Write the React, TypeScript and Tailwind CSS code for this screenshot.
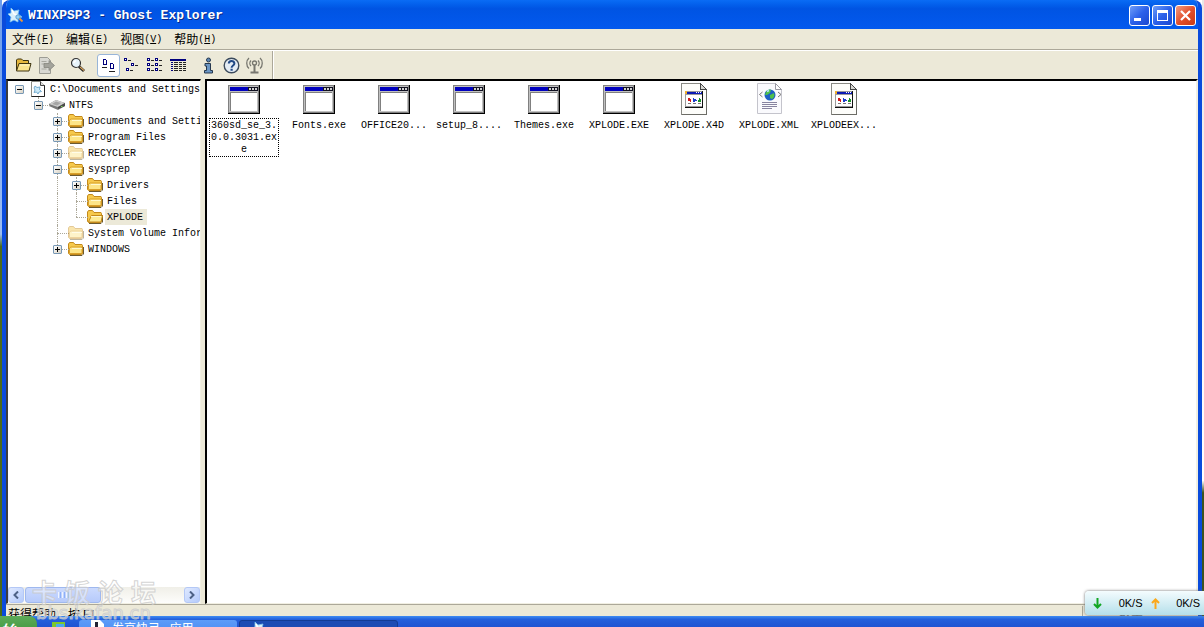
import React from "react";

interface ITreeNode {
  name: string;
  level: number;
  icon: "root" | "drive" | "folder" | "hidden" | "open";
  state?: "plus" | "minus";
  // columns left of the node where the dotted line runs on
  guides?: number[];
  last?: boolean;
  selected?: boolean;
}

interface IFile {
  name: string;
  type: "exe" | "doc" | "xml";
  focused?: boolean;
}

const menus = [
  { name: "文件", hotkey: "F" },
  { name: "编辑", hotkey: "E" },
  { name: "视图", hotkey: "V" },
  { name: "帮助", hotkey: "H" },
];

const tree: ITreeNode[] = [
  { name: "C:\\Documents and Settings", level: 0, icon: "root", state: "minus" },
  { name: "NTFS", level: 1, icon: "drive", state: "minus", last: true },
  { name: "Documents and Settings", level: 2, icon: "folder", state: "plus" },
  { name: "Program Files", level: 2, icon: "folder", state: "plus" },
  { name: "RECYCLER", level: 2, icon: "hidden", state: "plus" },
  { name: "sysprep", level: 2, icon: "folder", state: "minus" },
  { name: "Drivers", level: 3, icon: "folder", state: "plus", guides: [2] },
  { name: "Files", level: 3, icon: "folder", guides: [2] },
  { name: "XPLODE", level: 3, icon: "open", guides: [2], last: true, selected: true },
  { name: "System Volume Information", level: 2, icon: "hidden" },
  { name: "WINDOWS", level: 2, icon: "folder", state: "plus", last: true },
];

const files: IFile[] = [
  { name: "360sd_se_3.0.0.3031.exe", type: "exe", focused: true },
  { name: "Fonts.exe", type: "exe" },
  { name: "OFFICE20...", type: "exe" },
  { name: "setup_8....", type: "exe" },
  { name: "Themes.exe", type: "exe" },
  { name: "XPLODE.EXE", type: "exe" },
  { name: "XPLODE.X4D", type: "doc" },
  { name: "XPLODE.XML", type: "xml" },
  { name: "XPLODEEX...", type: "doc" },
];

const GhostIcon = () => (
  <svg width="16" height="16" viewBox="0 0 16 16">
    <path d="M3 1l3 3 5-1-1 4 4 3-4 1 0 4-4-2-4 2 1-5-3-3 3-1z" fill="#d9f0fb" stroke="#7fc4ee" strokeWidth="0.8" />
    <path d="M4 3l2 4 3 1" stroke="#fff" strokeWidth="1.5" fill="none" />
    <circle cx="10" cy="10" r="2.2" fill="#8fd0f5" stroke="#4b8fc8" strokeWidth="0.8" />
    <path d="M11.5 11.5l3 3" stroke="#e8963c" strokeWidth="1.8" />
  </svg>
);

const FolderIcon = ({ faded, open }: { faded?: boolean; open?: boolean }) => (
  <svg width="16" height="16" viewBox="0 0 16 16" opacity={faded ? 0.45 : 1}>
    <path d="M2 14.500h12l1.500-1.500V6" stroke="#6b5a30" fill="none" />
    <path d="M0.500 12.500V3l1-1.500h4l1.500 2h7l.5 1v8l-1 1h-12z" fill="#f6c94c" stroke="#c48a1c" />
    {open ? (
      <path d="M1.500 13l3-6.500h11l-1.500 6.500z" fill="#fdeb94" stroke="#c48a1c" />
    ) : (
      <path d="M1.500 12.500V7l1.500-1h11v6.500z" fill="#fde588" stroke="#d9a02a" />
    )}
    <path d="M4 7.500h10" stroke="#fffad0" />
  </svg>
);

const DriveIcon = () => (
  <svg width="16" height="16" viewBox="0 0 16 16">
    <path d="M0 7l7-4 9 3v3l-7 4-9-4z" fill="#777" />
    <path d="M0 7l7-4 9 3-7 4z" fill="#cfcfcf" />
    <path d="M3 7l4-2.500 5 1.500-4 2.500z" fill="#a5a5a5" />
    <path d="M9 12v-2l7-4v3z" fill="#4b4b4b" />
    <path d="M12 9.500h1.500" stroke="#7ddb5a" />
  </svg>
);

const RootIcon = () => (
  <svg width="16" height="16" viewBox="0 0 16 16">
    <path d="M1.500 0.500h9l4 4v11h-13z" fill="#fff" stroke="#8c8c84" />
    <path d="M14.500 4v11.500h-13" stroke="#222" fill="none" />
    <path d="M10.500 0.500v4h4" fill="#ddd" stroke="#444" />
    <path d="M5 5l2 1.500 3-.5-.5 2.500 2 2-2.500.5-1 2-1.500-2-2.500.5 1-2.500-1-2z" fill="#cdeaf8" stroke="#5c9cc4" strokeWidth="0.8" />
  </svg>
);

const NodeIcon = ({ icon }: { icon: ITreeNode["icon"] }) => {
  if (icon === "root") return <RootIcon />;
  if (icon === "drive") return <DriveIcon />;
  return <FolderIcon faded={icon === "hidden"} open={icon === "open"} />;
};

const ExeIcon = () => (
  <svg width="32" height="32" viewBox="0 0 32 32" shapeRendering="crispEdges">
    <path d="M0 2h32v29H0z" fill="#000" />
    <path d="M0 2h31v28H0z" fill="#808080" />
    <path d="M1 3h29v26H1z" fill="#c0c0c0" />
    <path d="M2 4h28v4H2z" fill="#0000bf" />
    <path d="M20 4h10v4H20z" fill="#101020" />
    <path d="M21 5h2v2h-2zM24 5h2v2h-2zM27 5h2v2h-2z" fill="#d0d0d0" />
    <path d="M2 9h27v19H2z" fill="#808080" />
    <path d="M3 10h26v18H3z" fill="#fff" />
  </svg>
);

const DocIcon = () => (
  <svg width="32" height="32" viewBox="0 0 32 32" shapeRendering="crispEdges">
    <path d="M3.500 0.500h19l6 6v25h-25z" fill="#fdfdfa" stroke="#8a8a84" />
    <path d="M28.500 7v24.500h-25" stroke="#6c6c66" fill="none" />
    <path d="M22.500 0.500v6h6z" fill="#d8d8d4" stroke="#444" />
    <path d="M7 8h18v17H7z" fill="#111" />
    <path d="M7 8h17v16H7z" fill="#9a9a9a" />
    <path d="M8 9h16v2H8z" fill="#0a1ab4" />
    <path d="M7 8h2v3H7z" fill="#f0b030" />
    <path d="M18 9h1v1h-1zM20 9h1v1h-1zM22 9h1v1h-1z" fill="#fff" />
    <path d="M8 12h16v11H8z" fill="#fff" />
    <path d="M10 15h2v1h1v3h-1v-1h-2z" fill="#d01818" />
    <path d="M15 15h1v1h2v1h1v1h-2v1h-2z" fill="#1c3cc8" />
    <path d="M21 15h1v1h1v3h-3v-2h1z" fill="#189028" />
    <path d="M10 20.500h3M15 20.500h3M20 20.500h3" stroke="#777" strokeWidth="1" />
  </svg>
);

const XmlIcon = () => (
  <svg width="32" height="32" viewBox="0 0 32 32">
    <path d="M4.500 0.500h18l6 6v24h-24z" fill="#fafafd" stroke="#c4c4cc" />
    <path d="M22.500 0.500v6h6z" fill="#fff" stroke="#9a9aa4" />
    <circle cx="17" cy="12" r="5.500" fill="#1d5fc4" />
    <path d="M13 9c1-2 4-3 5-2l-1 3-3 2-2 0zM17 12l4-2c1 2 0 5-2 6l-2-1z" fill="#4ec04a" />
    <path d="M14 8.500l2-1" stroke="#bfe8ff" strokeWidth="1.500" />
    <path d="M9.500 9l-3 2.500 3 2.500M25 9l3 2.500-3 2.500" stroke="#777" fill="none" />
    <path d="M9 19.500h15M9 21.500h15M9 23.500h15M9 25.500h10" stroke="#8884a0" />
  </svg>
);

const FileIcon = ({ type }: { type: IFile["type"] }) => {
  if (type === "exe") return <ExeIcon />;
  if (type === "doc") return <DocIcon />;
  return <XmlIcon />;
};

const OpenIcon = () => (
  <svg width="17" height="16" viewBox="0 0 17 16">
    <path d="M1.500 13.500V3l1-1h4l1.500 1.500h5.500V6" fill="#e6b83c" stroke="#3c3310" />
    <path d="M1.500 14l2.500-7.500h12l-2 7.500z" fill="#fbe48c" stroke="#3c3310" />
    <path d="M5 8h9" stroke="#fff8cf" />
  </svg>
);

const ExportIcon = () => (
  <svg width="17" height="17" viewBox="0 0 17 17">
    <path d="M1.500 0.500h8l3 3v13h-11z" fill="#d8d8d2" stroke="#9c9c94" />
    <path d="M3.500 4.500h5M3.500 7h3M3.500 12h5" stroke="#a8a8a0" />
    <path d="M6 6.500h5V3.500l5.500 5-5.500 5v-3H6z" fill="#a3a39b" stroke="#85857d" strokeWidth="0.800" />
  </svg>
);

const SearchIcon = () => (
  <svg width="16" height="16" viewBox="0 0 16 16">
    <path d="M9 9.500l5 4.500" stroke="#222" strokeWidth="3" />
    <path d="M10 10l4 3.500" stroke="#d9a45c" strokeWidth="1.200" />
    <circle cx="6" cy="6" r="4.500" fill="#e6f3fa" stroke="#333" strokeWidth="1.200" />
    <path d="M4 6c0-1 1-2 2-2" stroke="#fff" strokeWidth="1.500" fill="none" />
  </svg>
);

const LargeIconsIcon = () => (
  <svg width="15" height="13" viewBox="0 0 15 13" shapeRendering="crispEdges">
    <path d="M2.500 0.500h2l1 1v4h-3zM9.500 4.500h2l1 1v4h-3z" fill="#fff" stroke="#00007c" />
    <path d="M1 8.500h5M8 12.500h6" stroke="#222" />
  </svg>
);

const SmallIconsIcon = () => (
  <svg width="15" height="14" viewBox="0 0 15 14" shapeRendering="crispEdges">
    <path d="M0.500 0.500h2v2h-2zM7.500 5.500h2v2h-2zM2.500 10.500h2v2h-2z" fill="#fff" stroke="#00007c" />
    <path d="M4 2.500h3M11 7.500h3M6 12.500h3" stroke="#222" />
  </svg>
);

const ListIcon = () => (
  <svg width="16" height="14" viewBox="0 0 16 14" shapeRendering="crispEdges">
    <path
      d="M0.500 0.500h2v2h-2zM8.500 0.500h2v2h-2zM0.500 5.500h2v2h-2zM8.500 5.500h2v2h-2zM0.500 10.500h2v2h-2zM8.500 10.500h2v2h-2z"
      fill="#fff"
      stroke="#00007c"
    />
    <path d="M4 2.500h3M12 2.500h3M4 7.500h3M12 7.500h3M4 12.500h3M12 12.500h3" stroke="#222" />
  </svg>
);

const DetailsIcon = () => (
  <svg width="16" height="13" viewBox="0 0 16 13" shapeRendering="crispEdges">
    <path d="M0 1h16" stroke="#00007c" strokeWidth="2" />
    <path d="M4 3.500h4M9 3.500h3M13 3.500h3M4 5.500h4M9 5.500h3M13 5.500h3M4 7.500h4M9 7.500h3M13 7.500h3M4 9.500h4M9 9.500h3M13 9.500h3M4 11.500h4M9 11.500h3M13 11.500h3" stroke="#222" />
    <path d="M1 3.500h2M1 5.500h2M1 7.500h2M1 9.500h2M1 11.500h2" stroke="#00007c" />
  </svg>
);

const InfoIcon = () => (
  <svg width="11" height="17" viewBox="0 0 11 17">
    <circle cx="5.500" cy="3" r="2" fill="#5c86b4" stroke="#26384e" />
    <path d="M2 6.500h5.500v7h2v2.500h-8v-2.500h2v-4.500h-1.500z" fill="#6b96c4" stroke="#26384e" />
  </svg>
);

const HelpIcon = () => (
  <svg width="17" height="17" viewBox="0 0 17 17">
    <circle cx="8.500" cy="8.500" r="7.300" fill="#e4ecf4" stroke="#3b4a5c" strokeWidth="1.400" />
    <path d="M5.800 6.500c0-3.500 5.600-3.500 5.600 0 0 2-2.800 2-2.800 4.200" fill="none" stroke="#224a86" strokeWidth="2" />
    <path d="M7.500 11.800h2.200v2H7.500z" fill="#224a86" />
  </svg>
);

const AntennaIcon = () => (
  <svg width="17" height="17" viewBox="0 0 17 17" fill="none" stroke="#77776f" strokeWidth="1.300">
    <path d="M3 1c-3 2.500-3 8 0 10.500M14 1c3 2.500 3 8 0 10.500M5 3.500c-1.500 1.500-1.500 4 0 5.500M12 3.500c1.500 1.500 1.500 4 0 5.500" />
    <circle cx="8.500" cy="6" r="2" />
    <path d="M8.500 8v7M4.500 15.500h8" strokeWidth="2" />
  </svg>
);

const toolGroups = [
  [
    { label: "打开", icon: <OpenIcon /> },
    { label: "提取", icon: <ExportIcon /> },
  ],
  [{ label: "查找", icon: <SearchIcon /> }],
  [
    { label: "大图标", icon: <LargeIconsIcon />, active: true },
    { label: "小图标", icon: <SmallIconsIcon /> },
    { label: "列表", icon: <ListIcon /> },
    { label: "详细资料", icon: <DetailsIcon /> },
  ],
  [
    { label: "属性", icon: <InfoIcon /> },
    { label: "帮助", icon: <HelpIcon /> },
    { label: "广播", icon: <AntennaIcon /> },
  ],
];

const TitleBar = () => (
  <header className="flex h-[29px] shrink-0 items-center bg-linear-to-b from-[#0a6cf5] via-[#0054e3] via-30% to-[#0359ee] px-0.5">
    <GhostIcon />
    <h1 className="ml-1 flex-1 pt-0.5 font-['Liberation_Mono',monospace] text-[13px] font-bold text-white [text-shadow:1px_1px_#0b2a86]">
      WINXPSP3 - Ghost Explorer
    </h1>
    <div className="flex gap-0.5 pt-0.5">
      <button
        aria-label="最小化"
        className="flex size-[21px] items-center justify-center rounded-[3px] border border-white bg-linear-to-br from-[#6f9cf8] via-[#2c61ea] to-[#1c48d0]"
      >
        <svg width="13" height="13" viewBox="0 0 13 13">
          <path d="M1 9h7v3H1z" fill="#fff" />
        </svg>
      </button>
      <button
        aria-label="最大化"
        className="flex size-[21px] items-center justify-center rounded-[3px] border border-white bg-linear-to-br from-[#6f9cf8] via-[#2c61ea] to-[#1c48d0]"
      >
        <svg width="13" height="13" viewBox="0 0 13 13" shapeRendering="crispEdges">
          <path d="M1 1h11v11H1zM2 4v7h9V4z" fill="#fff" fillRule="evenodd" />
        </svg>
      </button>
      <button
        aria-label="关闭"
        className="flex size-[21px] items-center justify-center rounded-[3px] border border-white bg-linear-to-br from-[#f09a80] via-[#e2502c] to-[#c83a12]"
      >
        <svg width="13" height="13" viewBox="0 0 13 13">
          <path d="M2 2l9 9M11 2l-9 9" stroke="#fff" strokeWidth="2.200" />
        </svg>
      </button>
    </div>
  </header>
);

const Toolbar = () => (
  <div className="flex h-7 shrink-0 items-stretch pl-1.5">
    <div className="flex items-center gap-2 pr-1.5">
      {toolGroups.map((group, index) => (
        <div key={index} className="flex">
          {group.map((tool) => (
            <button
              key={tool.label}
              aria-label={tool.label}
              className={`flex h-[23px] w-[23px] items-center justify-center ${
                "active" in tool ? "rounded-[3px] border border-[#98b5d8] bg-white" : ""
              }`}
            >
              {tool.icon}
            </button>
          ))}
        </div>
      ))}
    </div>
    <div className="w-0.5 border-l border-[#aca899] bg-white"></div>
  </div>
);

const TreeRow: React.FC<{ node: ITreeNode }> = ({ node }) => {
  const columns = Array.from({ length: node.level }, (_, i) => i);

  return (
    <li className="flex h-4 items-center whitespace-pre pl-[7px]">
      {columns.map((column) => (
        <span key={column} className="h-4 w-[19px] shrink-0 pl-1">
          {node.guides?.includes(column) && (
            <span className="block h-4 w-px border-l border-dotted border-[#aca899]"></span>
          )}
        </span>
      ))}
      <span className="relative flex h-4 w-[15px] shrink-0 items-center">
        {node.level > 0 && (
          <>
            <span
              className={`absolute left-1 top-0 border-l border-dotted border-[#aca899] ${
                node.last ? "h-2" : "h-4"
              }`}
            ></span>
            <span className="absolute left-1 top-2 w-3 border-t border-dotted border-[#aca899]"></span>
          </>
        )}
        {node.state && (
          <button
            aria-label={node.state === "plus" ? "展开" : "折叠"}
            className="relative size-[9px] rounded-[1px] border border-[#7898b5] bg-linear-to-br from-white to-[#d8d2c4]"
          >
            <svg width="7" height="7" viewBox="0 0 7 7" shapeRendering="crispEdges">
              <path d={node.state === "plus" ? "M1 3.500h5M3.500 1v5" : "M1 3.500h5"} stroke="#000" />
            </svg>
          </button>
        )}
      </span>
      <span className="shrink-0">
        <NodeIcon icon={node.icon} />
      </span>
      <span className={`ml-0.5 h-4 px-0.5 pt-px leading-4 ${node.selected ? "bg-[#ece9d8] pr-1" : ""}`}>
        {node.name}
      </span>
    </li>
  );
};

const Scrollbar = () => (
  <div className="flex h-4 shrink-0 bg-linear-to-b from-[#f0efe8] to-[#fdfdfb]">
    <button
      aria-label="向左滚动"
      className="flex w-4 items-center justify-center rounded-[3px] border border-[#b4c8f6] bg-linear-to-br from-[#dfe9ff] to-[#b5cbfb]"
    >
      <svg width="8" height="8" viewBox="0 0 8 8">
        <path d="M6 0.500L2.500 4 6 7.500" fill="none" stroke="#4d6185" strokeWidth="2" />
      </svg>
    </button>
    <div className="flex-1 pl-px">
      <div className="flex h-4 w-12/25 items-center justify-center gap-px rounded-[3px] border border-[#9fb8ee] bg-linear-to-b from-[#cbdafe] to-[#b6cafb]">
        <span className="h-1.5 w-px bg-[#eef4fe]"></span>
        <span className="h-1.5 w-px bg-[#8cb0f8]"></span>
        <span className="h-1.5 w-px bg-[#eef4fe]"></span>
        <span className="h-1.5 w-px bg-[#8cb0f8]"></span>
        <span className="h-1.5 w-px bg-[#eef4fe]"></span>
        <span className="h-1.5 w-px bg-[#8cb0f8]"></span>
      </div>
    </div>
    <button
      aria-label="向右滚动"
      className="flex w-4 items-center justify-center rounded-[3px] border border-[#b4c8f6] bg-linear-to-br from-[#dfe9ff] to-[#b5cbfb]"
    >
      <svg width="8" height="8" viewBox="0 0 8 8">
        <path d="M2 0.500L5.500 4 2 7.500" fill="none" stroke="#4d6185" strokeWidth="2" />
      </svg>
    </button>
  </div>
);

const FileItem: React.FC<{ file: IFile }> = ({ file }) => (
  <li className="flex w-[75px] flex-col items-center pr-px">
    <FileIcon type={file.type} />
    <span
      className={`mt-[3px] w-[70px] break-all border border-dotted pt-px text-center leading-3 ${
        file.focused ? "border-black" : "border-transparent"
      }`}
    >
      {file.name}
    </span>
  </li>
);

const Watermark = () => (
  <div className="pointer-events-none absolute bottom-1.5 left-8 select-none text-white/40 [-webkit-text-stroke:1px_#c9c9c9cc]">
    <div className="flex gap-2 font-['Noto_Sans_CJK_SC',sans-serif] text-[25px] font-bold leading-7">
      <span>卡</span>
      <span>饭</span>
      <span>论</span>
      <span>坛</span>
    </div>
    <div className="pl-1 font-['DejaVu_Sans',sans-serif] text-lg leading-4">bbs.kafan.cn</div>
  </div>
);

const SpeedMeter = () => (
  <div className="absolute bottom-3 right-0 flex h-6 w-[119px] items-center rounded-l-[4px] bg-linear-to-b from-[#f4fcfe] to-[#b4dfea] pl-2 pr-1 font-['Liberation_Sans',sans-serif] text-[11px] text-black shadow-[0_0_3px_#666]">
    <svg width="9" height="11" viewBox="0 0 9 11">
      <path d="M4.500 0v9M1 6l3.500 3.500L8 6" fill="none" stroke="#12a624" strokeWidth="2" />
    </svg>
    <span className="flex-1 text-right">0K/S</span>
    <svg width="9" height="11" viewBox="0 0 9 11" className="ml-2">
      <path d="M4.500 11V2M1 5l3.500-3.500L8 5" fill="none" stroke="#fba81c" strokeWidth="2" />
    </svg>
    <span className="flex-1 text-right">0K/S</span>
  </div>
);

const Taskbar = () => (
  <footer className="flex h-[11px] shrink-0 overflow-hidden bg-linear-to-b from-[#3f8cf3] via-[#2460dc] via-30% to-[#1f54d2] font-['Noto_Sans_CJK_SC',sans-serif] text-xs text-white">
    <button className="h-7 w-[37px] overflow-hidden rounded-tr-lg bg-linear-to-b from-[#5cab58] to-[#2f8a2f] text-left text-base font-bold italic">
      始
    </button>
    <svg width="16" height="16" viewBox="0 0 16 16" className="ml-3.5 mt-1.5 shrink-0">
      <path d="M1 0h13v12H1z" fill="#7cc82c" />
      <path d="M5 2h8v8H5z" fill="#4aa8f0" />
    </svg>
    <button className="ml-3 mt-1 flex h-6 w-[158px] shrink-0 items-start gap-2 rounded-t-[3px] bg-linear-to-b from-[#5c9cf8] to-[#3c7cf0] pl-3">
      <svg width="13" height="14" viewBox="0 0 13 14">
        <path d="M0 0h9l4 4v10H0z" fill="#fff" />
        <path d="M4 2h3v8H4z" fill="#223" />
      </svg>
      <span>发高快弓 - 应用</span>
    </button>
    <button
      aria-label="Ghost Explorer"
      className="ml-0.5 mt-1 flex h-6 w-[159px] shrink-0 rounded-t-[3px] border border-[#123c94] bg-[#1c4cb4] pl-3"
    >
      <GhostIcon />
    </button>
  </footer>
);

const App = () => {
  return (
    <div className="relative flex h-screen flex-col overflow-hidden bg-white">
      <div className="flex min-h-0 flex-1">
        <div className="w-0.5 bg-linear-to-b from-[#6c9cec] from-0% via-[#9cbcf0] via-38% to-[#4c6a18] to-40%"></div>
        <main className="flex min-w-0 flex-1 flex-col overflow-hidden rounded-t-lg border-x-4 border-[#0a4bdc] bg-[#ece9d8] font-['Liberation_Mono','Noto_Sans_CJK_SC',monospace] text-[10px] text-black">
          <TitleBar />
          <nav className="flex h-5 shrink-0 items-center">
            {menus.map((menu) => (
              <button key={menu.name} className="flex items-center px-1.5">
                <span className="font-['Noto_Sans_CJK_SC',sans-serif] text-xs leading-5">{menu.name}</span>
                <span>
                  (<u>{menu.hotkey}</u>)
                </span>
              </button>
            ))}
          </nav>
          <div className="h-0.5 shrink-0 border-t border-[#aca899] bg-white"></div>
          <Toolbar />
          <div className="flex min-h-0 flex-1 gap-1">
            <section className="flex w-[195px] shrink-0 flex-col border-2 border-b border-r border-black border-b-[#f1efe2] border-l-[#3c3c3c] border-r-[#f1efe2] bg-white">
              <ul className="min-h-0 flex-1 overflow-hidden">
                {tree.map((node) => (
                  <TreeRow key={node.name} node={node} />
                ))}
              </ul>
              <Scrollbar />
            </section>
            <section className="min-w-0 flex-1 border-2 border-b border-black border-b-[#f1efe2] border-r-[#f1efe2] bg-white">
              <ul className="flex flex-wrap pt-0.5">
                {files.map((file) => (
                  <FileItem key={file.name} file={file} />
                ))}
              </ul>
            </section>
          </div>
          <div className="flex h-3 shrink-0 items-start overflow-hidden border-t border-[#aca899] pl-0.5 pt-px font-['Noto_Sans_CJK_SC',sans-serif] text-xs">
            <span className="flex-1">获得帮助，按 F1</span>
            <span className="w-[116px] border-l border-[#aca899] pl-9 text-[#777]">数字</span>
          </div>
        </main>
        <div className="w-0.5 bg-linear-to-b from-[#e8e8e8] from-0% via-white via-78% to-[#3c5420] to-80%"></div>
      </div>
      <Taskbar />
      <Watermark />
      <SpeedMeter />
    </div>
  );
};

export default App;
